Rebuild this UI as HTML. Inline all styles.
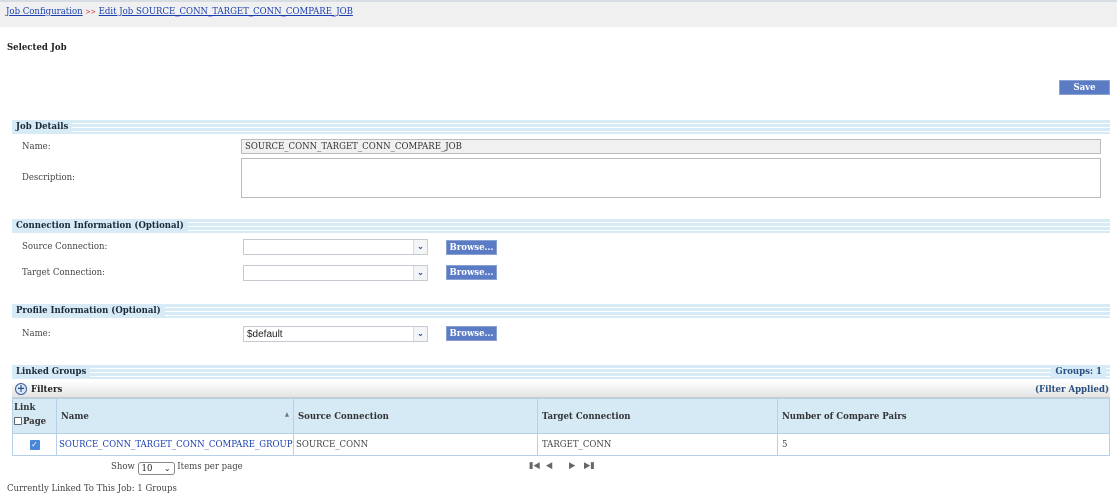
<!DOCTYPE html>
<html><head><meta charset="utf-8"><style>
*{margin:0;padding:0;box-sizing:border-box}
body{width:1117px;height:496px;position:relative;background:#fff;font-family:"DejaVu Serif Condensed","DejaVu Serif","Liberation Serif",serif;font-stretch:condensed;font-size:9.5px;color:#333;overflow:hidden}
.a{position:absolute;white-space:nowrap}
.top{left:0;top:0;width:1117px;height:27px;background:#f0f0f0;border-top:2px solid #d8dde3}
a{color:#1a3fb0;text-decoration:underline}
.hdr{position:absolute;left:12px;width:1098px;height:14px;background:repeating-linear-gradient(to bottom,#d6ebf6 0,#d6ebf6 3px,#fff 3px,#fff 4px)}
.hdr span{position:absolute;left:0;top:1px;background:#d6ebf6;padding:0 4px;font-weight:bold;color:#1c2a3a;line-height:12px}
.lbl{color:#444}
.inp{position:absolute;border:1px solid #bbb;background:#fff}
.sel{position:absolute;height:16px;border:1px solid #c6cbd3;background:#fff}
.sel .dd{position:absolute;right:0;top:0;width:14px;height:14px;border-left:1px solid #d8dce2;background:#f4f5f7;color:#2b55a0;font-size:8px;text-align:center;line-height:12px;font-weight:bold}
.btn{position:absolute;height:15px;background:#5b7cc4;color:#fff;font-weight:bold;text-align:center;line-height:13px;border:1px solid #8aa1d4}
table{position:absolute;left:12px;top:398px;width:1098px;border-collapse:collapse;table-layout:fixed}
td,th{border:1px solid #b8d0e6;text-align:left;padding:0 4px;font-size:9.5px;white-space:nowrap;overflow:hidden}
th{background:#d6eaf6;height:35px;font-weight:bold;color:#333}
td{height:22px;color:#444}
</style></head><body>
<div class="a top"></div>
<div class="a" style="left:6px;top:6px"><a>Job Configuration</a> <span style="color:#d33;font-size:7px">&gt;&gt;</span> <a>Edit Job SOURCE_CONN_TARGET_CONN_COMPARE_JOB</a></div>
<div class="a" style="left:7px;top:42px;font-weight:bold;color:#222">Selected Job</div>
<div class="btn" style="left:1059px;top:80px;width:51px">Save</div>

<div class="hdr" style="top:120px"><span>Job Details</span></div>
<div class="a lbl" style="left:22px;top:141px">Name:</div>
<div class="inp" style="left:241px;top:139px;width:860px;height:15px;background:#f0f0f0;padding-left:3px;line-height:13px;color:#333">SOURCE_CONN_TARGET_CONN_COMPARE_JOB</div>
<div class="a lbl" style="left:22px;top:172px">Description:</div>
<div class="inp" style="left:241px;top:158px;width:860px;height:40px"></div>

<div class="hdr" style="top:219px"><span>Connection Information (Optional)</span></div>
<div class="a lbl" style="left:22px;top:241px">Source Connection:</div>
<div class="sel" style="left:243px;top:239px;width:185px"><div class="dd">&#8964;</div></div>
<div class="btn" style="left:446px;top:240px;width:51px">Browse...</div>
<div class="a lbl" style="left:22px;top:267px">Target Connection:</div>
<div class="sel" style="left:243px;top:265px;width:185px"><div class="dd">&#8964;</div></div>
<div class="btn" style="left:446px;top:265px;width:51px">Browse...</div>

<div class="hdr" style="top:304px"><span>Profile Information (Optional)</span></div>
<div class="a lbl" style="left:22px;top:328px">Name:</div>
<div class="sel" style="left:243px;top:326px;width:185px;font-family:'Liberation Sans',sans-serif;font-stretch:normal;font-size:10px;color:#222;padding-left:3px;line-height:15px">$default<div class="dd" style="font-family:'DejaVu Serif',serif">&#8964;</div></div>
<div class="btn" style="left:446px;top:326px;width:51px">Browse...</div>

<div class="hdr" style="top:365px"><span>Linked Groups</span><span style="left:auto;right:4px;color:#2a4f80">Groups: 1</span></div>
<div class="a" style="left:12px;top:381px;width:1098px;height:17px;background:linear-gradient(#fff,#e4e4e4);border-bottom:1px solid #ccc"></div>
<div class="a" style="left:15px;top:383px;width:12px;height:12px;border-radius:50%;border:1px solid #3a5f99;background:#dbe8f7;color:#2a4f88;font-size:11px;line-height:10px;text-align:center;font-weight:bold">+</div>
<div class="a" style="left:31px;top:384px;font-weight:bold;color:#222">Filters</div>
<div class="a" style="right:8px;top:384px;font-weight:bold;color:#2a4f80">(Filter Applied)</div>

<table>
<colgroup><col style="width:44px"><col style="width:237px"><col style="width:244px"><col style="width:240px"><col></colgroup>
<tr><th style="padding:0 1px;vertical-align:top;line-height:14px;padding-top:2px">Link<br><span style="display:inline-block;width:8px;height:8px;border:1px solid #666;background:#fff;vertical-align:-1px;border-radius:1px;margin-right:1px"></span>Page</th>
<th>Name<span style="float:right;font-size:6px;color:#777">&#9650;</span></th>
<th>Source Connection</th><th>Target Connection</th><th>Number of Compare Pairs</th></tr>
<tr><td style="text-align:center"><span style="display:inline-block;width:10px;height:10px;background:#4a86d8;color:#fff;font-size:8px;line-height:10px;border-radius:1px">&#10003;</span></td>
<td style="color:#1a3fb0;padding:0 2px">SOURCE_CONN_TARGET_CONN_COMPARE_GROUP</td><td style="padding:0 2px">SOURCE_CONN</td><td>TARGET_CONN</td><td>5</td></tr>
</table>

<div class="a lbl" style="left:111px;top:461px">Show <span style="display:inline-block;width:37px;height:13px;border:1px solid #888;border-radius:3px;line-height:11px;padding-left:3px;color:#222;vertical-align:-2px">10 <span style="float:right;margin-right:3px;font-size:8px">&#8964;</span></span> Items per page</div>
<div class="a" style="left:529px;top:461px;color:#666;font-size:9px">&#9646;&#9664;</div>
<div class="a" style="left:546px;top:461px;color:#666;font-size:9px">&#9664;</div>
<div class="a" style="left:569px;top:461px;color:#666;font-size:9px">&#9654;</div>
<div class="a" style="left:584px;top:461px;color:#666;font-size:9px">&#9654;&#9646;</div>
<div class="a lbl" style="left:7px;top:483px">Currently Linked To This Job: 1 Groups</div>
</body></html>
